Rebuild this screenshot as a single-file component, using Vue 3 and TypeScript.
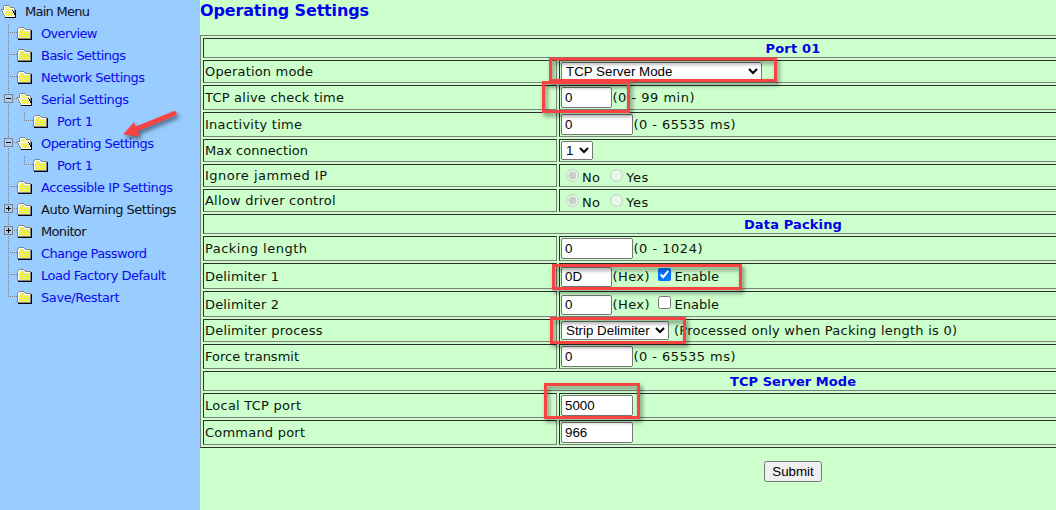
<script setup lang="ts">
import type { Directive } from 'vue'

type NavKind = 'closed' | 'open'
interface NavItem {
  label: string
  width: number
  icon: NavKind
  level: 0 | 1 | 2
  toggle?: 'plus' | 'minus'
  plain?: boolean
  last?: boolean
}

interface Row {
  kind: 'head' | 'input' | 'select' | 'radio'
  label: string
  width: number
  height: number
  value?: string
  size?: 'small' | 'wide'
  hint?: string
  hintWidth?: number
  check?: boolean
  hasCheck?: boolean
}

// Spreads the letters of a label so that it fills the given width.
const vFit: Directive<HTMLElement, number> = {
  mounted(el, { value }) {
    const count = (el.textContent ?? '').length
    const natural = el.getBoundingClientRect().width
    if (count > 1) el.style.letterSpacing = `${(value - natural) / (count - 1)}px`
  },
}

const nav: NavItem[] = [
  { label: 'Main Menu', width: 65, icon: 'open', level: 0, plain: true },
  { label: 'Overview', width: 56.5, icon: 'closed', level: 1 },
  { label: 'Basic Settings', width: 85, icon: 'closed', level: 1 },
  { label: 'Network Settings', width: 104, icon: 'closed', level: 1 },
  { label: 'Serial Settings', width: 88, icon: 'open', level: 1, toggle: 'minus' },
  { label: 'Port 1', width: 36, icon: 'closed', level: 2 },
  { label: 'Operating Settings', width: 113, icon: 'open', level: 1, toggle: 'minus' },
  { label: 'Port 1', width: 36, icon: 'closed', level: 2 },
  { label: 'Accessible IP Settings', width: 132, icon: 'closed', level: 1 },
  { label: 'Auto Warning Settings', width: 135.5, icon: 'closed', level: 1, toggle: 'plus', plain: true },
  { label: 'Monitor', width: 45.5, icon: 'closed', level: 1, toggle: 'plus', plain: true },
  { label: 'Change Password', width: 106, icon: 'closed', level: 1 },
  { label: 'Load Factory Default', width: 125, icon: 'closed', level: 1 },
  { label: 'Save/Restart', width: 78.5, icon: 'closed', level: 1, last: true },
]

const rows: Row[] = [
  { kind: 'head', label: 'Port 01', width: 55, height: 20 },
  { kind: 'select', label: 'Operation mode', width: 108, height: 23, value: 'TCP Server Mode', size: 'wide' },
  { kind: 'input', label: 'TCP alive check time', width: 139, height: 25, value: '0', size: 'small', hint: '(0 - 99 min)', hintWidth: 82 },
  { kind: 'input', label: 'Inactivity time', width: 97, height: 25, value: '0', size: 'wide', hint: '(0 - 65535 ms)', hintWidth: 102 },
  { kind: 'select', label: 'Max connection', width: 103, height: 23, value: '1', size: 'small' },
  { kind: 'radio', label: 'Ignore jammed IP', width: 122, height: 23 },
  { kind: 'radio', label: 'Allow driver control', width: 130.5, height: 23 },
  { kind: 'head', label: 'Data Packing', width: 98, height: 20 },
  { kind: 'input', label: 'Packing length', width: 102, height: 25, value: '0', size: 'wide', hint: '(0 - 1024)', hintWidth: 69 },
  { kind: 'input', label: 'Delimiter 1', width: 74, height: 26, value: '0D', size: 'small', hint: '(Hex)', hintWidth: 37, hasCheck: true, check: true },
  { kind: 'input', label: 'Delimiter 2', width: 74, height: 26, value: '0', size: 'small', hint: '(Hex)', hintWidth: 37, hasCheck: true, check: false },
  { kind: 'select', label: 'Delimiter process', width: 117.5, height: 23, value: 'Strip Delimiter', hint: '(Processed only when Packing length is 0)', hintWidth: 283 },
  { kind: 'input', label: 'Force transmit', width: 94, height: 25, value: '0', size: 'wide', hint: '(0 - 65535 ms)', hintWidth: 102 },
  { kind: 'head', label: 'TCP Server Mode', width: 126, height: 20 },
  { kind: 'input', label: 'Local TCP port', width: 96, height: 25, value: '5000', size: 'wide' },
  { kind: 'input', label: 'Command port', width: 100, height: 25, value: '966', size: 'wide' },
]

const iconX = (level: number) => (level === 0 ? 1 : level === 1 ? 17 : 33)
</script>

<template>
  <div class="page">
    <svg class="defs" width="0" height="0" aria-hidden="true">
      <defs>
        <g id="folder-closed">
          <path d="M2 12h13V3h-1v8H2z" fill="#000" />
          <path d="M2 0h5v1h1v1h6v10H0V2h1V1h1z" fill="#858585" />
          <path d="M2 1h5v1h1v1h5v8H1V2h1z" fill="#fff" />
          <path d="M3 2h4v2h6v7H2V4h1z" fill="#ffff28" />
          <path
            d="M3 2.5H7M4 3.5H7M3 4.500H13M2 5.500H13M3 6.500H13M2 7.500H13M3 8.500H13M2 9.500H13M3 10.500H13"
            fill="none"
            stroke="#dcdc84"
            stroke-dasharray="1 1"
          />
          <path d="M1 12h14v1H1z" fill="#000" />
        </g>
        <g id="folder-open">
          <path d="M3 0h5v1h1v1h4v1h1v2h1v8H4v-1H3v-2H2V8H1V6H0V4h2V1h1z" fill="#858585" />
          <path d="M3 1h5v1h1v1h4v7h-1V5H3z" fill="#fff" />
          <path d="M4 2h4v2h4v1H4z" fill="#f4f46c" />
          <path d="M1 5h10v1h1v2h1v2h1v2H4v-2H3V8H2V6H1z" fill="#fff" />
          <path d="M3 6h8v2h1v2h1v1H5V9H4V7H3z" fill="#ffff28" />
          <path
            d="M3 6.500H11M4 7.500H11M5 8.500H12M6 9.500H12M5 10.500H13"
            fill="none"
            stroke="#e2e290"
            stroke-dasharray="1 1"
          />
          <path d="M11 5h1v1h1v2h1V5h1v8H4v-1h10v-2h-1V8h-1V6h-1z" fill="#000" />
        </g>
      </defs>
    </svg>

    <nav class="menu">
      <div v-for="(item, i) in nav" :key="i" class="node">
        <svg class="tree" :class="`level-${item.level}`" height="22" shape-rendering="crispEdges" aria-hidden="true">
          <template v-if="item.level > 0">
            <path :d="`M8.5 ${i === 1 ? 2 : 0}V${item.last ? 11 : 22}`" class="dots" />
            <path v-if="item.level === 1" d="M10 10.5H17" class="dots" />
            <path v-else d="M24.5 2V11M26 10.5H33" class="dots" />
          </template>
          <g v-if="item.toggle">
            <rect x="4.5" y="6.5" width="8" height="8" fill="#a6d0fb" stroke="#808080" />
            <path d="M6 10.5h5" stroke="#000" />
            <path v-if="item.toggle === 'plus'" d="M8.5 8v5" stroke="#000" />
          </g>
          <use :href="`#folder-${item.icon}`" :x="iconX(item.level)" y="5" />
        </svg>
        <span v-fit="item.width" class="text" :class="{ plain: item.plain }">{{ item.label }}</span>
      </div>
    </nav>

    <main class="content">
      <h1><span v-fit="169">Operating Settings</span></h1>
      <div class="grid">
        <template v-for="row in rows" :key="row.label">
          <div v-if="row.kind === 'head'" class="cell head">
            <span v-fit="row.width">{{ row.label }}</span>
          </div>
          <div v-else class="pair" :class="`h${row.height}`">
            <div class="cell name"><span v-fit="row.width">{{ row.label }}</span></div>
            <div class="cell field" :class="{ checks: row.hasCheck }">
              <input v-if="row.kind === 'input'" type="text" :class="row.size" :value="row.value" />
              <select v-else-if="row.kind === 'select'" :class="row.size ?? 'medium'">
                <option>{{ row.value }}</option>
              </select>
              <template v-else>
                <input type="radio" :name="row.label" disabled checked />
                <span v-fit="18" class="option no">No</span>
                <input type="radio" :name="row.label" disabled class="second" />
                <span v-fit="22" class="option">Yes</span>
              </template>
              <span v-if="row.hint" v-fit="row.hintWidth ?? 0" class="hint" :class="{ spaced: row.kind === 'select' }">{{ row.hint }}</span>
              <template v-if="row.hasCheck">
                <span class="check-slot"><input type="checkbox" :checked="row.check" /></span>
                <span v-fit="44.500" class="enable">Enable</span>
              </template>
            </div>
          </div>
        </template>
      </div>
      <div class="actions"><button type="button">Submit</button></div>
    </main>

    <svg class="marks" width="1056" height="510" aria-hidden="true">
      <g fill="none" stroke="#f84343" stroke-width="3">
        <rect x="550.5" y="59" width="225" height="21.5" />
        <rect x="543.5" y="82.5" width="85" height="29" />
        <rect x="553.5" y="265.5" width="187" height="23" />
        <rect x="551.5" y="318.5" width="133" height="24" />
        <rect x="545.5" y="384.5" width="93" height="33" />
      </g>
      <path d="M123 134.5L134 122l1.8 4.500L173.500 111.300a2.300 2.300 0 0 1 1.800 4.300L137.700 131.300l2 5z" fill="#f84343" />
    </svg>
  </div>
</template>

<style>
html,
body {
  margin: 0;
  overflow: hidden;
}
</style>

<style scoped>
.page {
  position: relative;
  display: flex;
  width: 1056px;
  height: 510px;
  overflow: hidden;
  background: #ccffcc;
  color: #0c160c;
  font: 13px/16px Verdana, 'DejaVu Sans', sans-serif;
}
.page span {
  white-space: nowrap;
}
.defs {
  position: absolute;
}
.menu {
  flex: 0 0 200px;
  background: #99ccff;
}
.node {
  display: flex;
  align-items: center;
  height: 22px;
}
.tree {
  flex: none;
  display: block;
}
.level-0 {
  width: 25px;
}
.level-1 {
  width: 41px;
}
.level-2 {
  width: 57px;
}
.dots {
  fill: none;
  stroke: #7c8088;
  stroke-dasharray: 1 1;
}
.text {
  padding-top: 2px;
  color: #0a0af0;
}
.text.plain {
  color: #101018;
}
.content {
  flex: 0 0 1186px;
}
h1 {
  margin: 0;
  height: 35px;
  font-size: 16px;
  line-height: 21px;
  color: #0000f0;
}
.grid {
  display: flex;
  flex-direction: column;
  gap: 2px;
  box-sizing: border-box;
  padding: 2px;
  border: 1px solid #808080;
  border-bottom-color: #2c2c2c;
}
.cell {
  box-sizing: border-box;
  display: flex;
  align-items: center;
  border: 1px solid #808080;
  border-top-color: #2c2c2c;
  border-left-color: #2c2c2c;
  padding: 0 1px;
}
.head {
  height: 20px;
  padding-top: 2px;
  justify-content: center;
  font-weight: bold;
  color: #0000e6;
}
.pair {
  display: grid;
  grid-template-columns: 354px 1fr;
  gap: 2px;
}
.h23 {
  height: 23px;
}
.h25 {
  height: 25px;
}
.h26 {
  height: 26px;
}
.h26 .name {
  padding-top: 2px;
}
input,
select,
button {
  box-sizing: border-box;
  margin: 0;
  font: 13.333px 'Liberation Sans', Arial, sans-serif;
}
input[type='text'] {
  height: 21px;
  padding: 1px 2px 1px 3px;
  border: 1px solid #767676;
  border-radius: 2px;
}
input.small {
  width: 51px;
}
input.wide {
  width: 72px;
}
select {
  height: 19px;
}
select.wide {
  width: 201px;
}
select.small {
  width: 32px;
}
select.medium {
  width: 108px;
}
input[type='radio'] {
  width: 13px;
  height: 13px;
  margin-left: 5px;
}
input[type='radio'].second {
  margin-left: 10px;
}
.option {
  margin: 4px 0 0 3px;
}
.hint {
  margin-left: 0.5px;
}
.hint.spaced {
  margin-left: 5px;
}
.checks input[type='text'] {
  margin-top: 1px;
  height: 20px;
}
.checks .hint,
.enable {
  margin-top: 2px;
}
.check-slot {
  display: flex;
  align-self: flex-start;
  margin: 4px 3px 0 8.5px;
}
.check-slot input {
  width: 13px;
  height: 13px;
}
.actions {
  display: flex;
  justify-content: center;
  padding-top: 13px;
}
button {
  width: 58px;
  height: 21px;
  padding: 0;
}
.marks {
  position: absolute;
  top: 0;
  left: 0;
  pointer-events: none;
  filter: drop-shadow(2px 3px 2px rgba(0, 0, 0, 0.5));
}
</style>
